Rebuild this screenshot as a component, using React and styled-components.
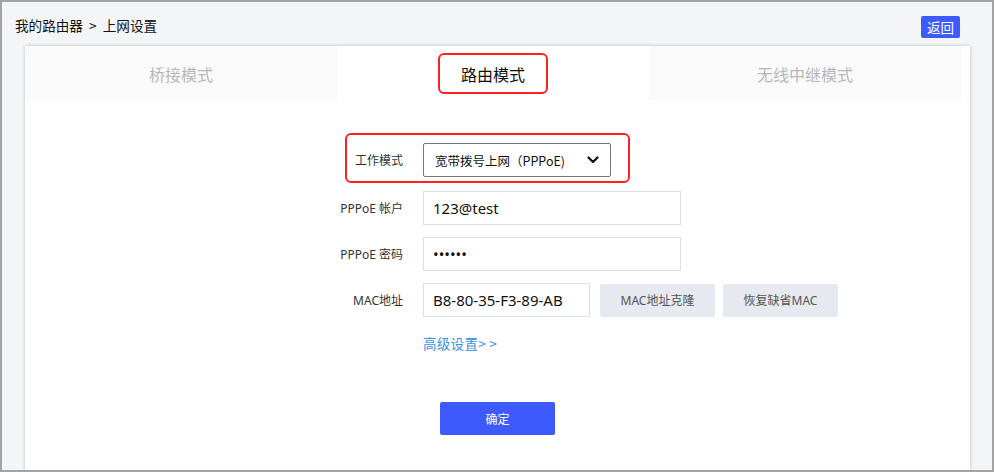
import React from "react";
import styled, { createGlobalStyle } from "styled-components";

const Global = createGlobalStyle`
  html, body { margin: 0; padding: 0; }
  body { font-family: "Noto Sans", "Noto Sans CJK SC", sans-serif; }
  * { box-sizing: border-box; }
`;

const Frame = styled.div`
  width: 994px;
  height: 472px;
  border: 2px solid #a3a3a3;
  background: #f4f5f7;
  display: flex;
  flex-direction: column;
  overflow: hidden;
`;

const Header = styled.div`
  height: 44px;
  padding: 6px 32px 0 13px;
  display: flex;
  align-items: center;
  justify-content: space-between;
`;

const Crumb = styled.div`
  font-size: 13.6px;
  color: #111;
  margin-bottom: 4px;
  font-family: "Noto Sans CJK SC", sans-serif;
  white-space: pre;
`;

const BackButton = styled.button`
  height: 22px;
  width: 39px;
  padding: 0;
  border: none;
  border-radius: 2px;
  background: #3d5afe;
  color: #fff;
  font-size: 13.5px;
  font-family: "Noto Sans CJK SC", sans-serif;
  line-height: 22px;
`;

const Card = styled.div`
  flex: 1;
  margin: 0 22px 0 23px;
  background: #fff;
  box-shadow: 0 0 4px rgba(0, 0, 0, 0.22);
  display: flex;
  flex-direction: column;
`;

const Tabs = styled.div`
  display: grid;
  grid-template-columns: repeat(3, 312px);
  height: 55px;
`;

const Tab = styled.div`
  display: flex;
  align-items: center;
  justify-content: center;
  background: ${(p) => (p.$active ? "#fff" : "#fafafa")};
  color: ${(p) => (p.$active ? "#111" : "#b8b8b8")};
  font-size: 16px;
  font-family: "Noto Sans CJK SC", sans-serif;
`;

const Marked = styled.span`
  display: inline-flex;
  align-items: center;
  justify-content: center;
  width: 110px;
  height: 41px;
  border: 2px solid #f22;
  border-radius: 6px;
`;

const Form = styled.div`
  padding: 42px 0 0 298px;
  display: flex;
  flex-direction: column;
  align-items: flex-start;
`;

const Row = styled.div`
  position: relative;
  display: flex;
  align-items: center;
  margin-top: ${(p) => p.$mt || 0}px;
`;

const HighlightRow = styled(Row)`
  &::after {
    content: "";
    position: absolute;
    left: 22px;
    right: -19px;
    top: -10px;
    bottom: -6px;
    border: 2px solid #f22;
    border-radius: 6px;
    pointer-events: none;
  }
`;

const Label = styled.div`
  width: 80px;
  margin-right: 20px;
  text-align: right;
  font-size: 12px;
  color: #333;
  font-family: "Noto Sans", "Noto Sans CJK SC", sans-serif;
`;

const SelectBox = styled.div`
  width: 188px;
  height: 34px;
  border: 1px solid #767676;
  border-radius: 2px;
  display: flex;
  align-items: center;
  justify-content: space-between;
  padding: 0 9px 0 11px;
  font-size: 12.5px;
  color: #111;
  font-family: "Noto Sans CJK SC", sans-serif;
  background: #fff;
`;

const Input = styled.input`
  width: ${(p) => p.$w || 258}px;
  height: 34px;
  border: 1px solid #dcdfe6;
  border-radius: 0;
  padding: 0 9px;
  font-size: 15px;
  color: #111;
  font-family: "Noto Sans", sans-serif;
  outline: none;
  background: #fff;
`;

const GreyButton = styled.button`
  width: 115px;
  height: 33px;
  margin-left: ${(p) => p.$ml}px;
  border: none;
  border-radius: 2px;
  background: #e6e9f0;
  color: #555;
  font-size: 12px;
  font-family: "Noto Sans", "Noto Sans CJK SC", sans-serif;
`;

const Link = styled.a`
  margin: 17px 0 0 100px;
  font-size: 13.5px;
  color: #3d8fe0;
  font-family: "Noto Sans CJK SC", sans-serif;
  text-decoration: none;
  line-height: 18px;
  letter-spacing: 0.3px;
`;

const Submit = styled.button`
  align-self: center;
  margin-top: 50px;
  width: 115px;
  height: 33px;
  border: none;
  border-radius: 2px;
  background: #3d5afe;
  color: #fff;
  font-size: 12px;
  font-family: "Noto Sans CJK SC", sans-serif;
`;

const Chevron = () => (
  <svg width="12" height="8" viewBox="0 0 12 8" style={{ marginRight: 2 }}>
    <path d="M1.5 1.5 L6 6 L10.5 1.5" fill="none" stroke="#111" strokeWidth="2.3" strokeLinecap="round" strokeLinejoin="round" />
  </svg>
);

export default function App() {
  return (
    <>
      <Global />
      <Frame>
        <Header>
          <Crumb>{"我的路由器  >  上网设置"}</Crumb>
          <BackButton>返回</BackButton>
        </Header>
        <Card>
          <Tabs>
            <Tab>桥接模式</Tab>
            <Tab $active>
              <Marked>路由模式</Marked>
            </Tab>
            <Tab>无线中继模式</Tab>
          </Tabs>
          <Form>
            <HighlightRow>
              <Label>工作模式</Label>
              <SelectBox>
                <span>宽带拨号上网（PPPoE)</span>
                <Chevron />
              </SelectBox>
            </HighlightRow>
            <Row $mt={14}>
              <Label>PPPoE 帐户</Label>
              <Input readOnly value="123@test" />
            </Row>
            <Row $mt={12}>
              <Label>PPPoE 密码</Label>
              <Input readOnly type="password" value="123456" />
            </Row>
            <Row $mt={12}>
              <Label>MAC地址</Label>
              <Input readOnly $w={167} value="B8-80-35-F3-89-AB" />
              <GreyButton $ml={10}>MAC地址克隆</GreyButton>
              <GreyButton $ml={8}>恢复缺省MAC</GreyButton>
            </Row>
            <Link href="#">高级设置&gt; &gt;</Link>
          </Form>
          <Submit>确定</Submit>
        </Card>
      </Frame>
    </>
  );
}
